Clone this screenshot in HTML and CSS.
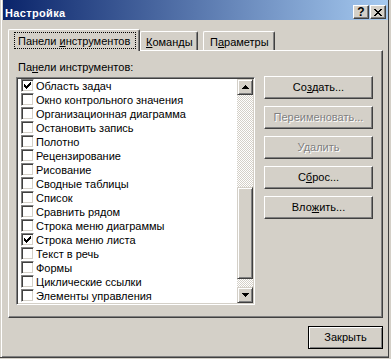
FILE: index.html
```html
<!DOCTYPE html>
<html lang="ru">
<head>
<meta charset="utf-8">
<title>Настройка</title>
<link rel="stylesheet" href="styles.css">
</head>
<body>
<div class="window">
  <div class="titlebar">
    <span class="title">Настройка</span>
    <div class="caption-btns">
      <span class="cbtn help">?</span>
      <span class="cbtn close"><svg width="8" height="7" viewBox="0 0 8 7" shape-rendering="crispEdges"><path d="M0 0h2v1H0zM6 0h2v1H6zM1 1h2v1H1zM5 1h2v1H5zM2 2h4v1H2zM3 3h2v1H3zM2 4h4v1H2zM1 5h2v1H1zM5 5h2v1H5zM0 6h2v1H0zM6 6h2v1H6z"/></svg></span>
    </div>
  </div>
  <div class="client">
    <div class="tabs">
      <div class="tab active"><span class="focus">Панели <u>и</u>нструментов</span></div>
      <div class="tab t2"><u>К</u>оманды</div>
      <div class="tab t3">П<u>а</u>раметры</div>
    </div>
    <div class="panel">
      <div class="left">
        <div class="label">Па<u>н</u>ели инструментов:</div>
        <div class="listbox">
          <div class="items">
            <div class="item"><span class="chk"><svg width="11" height="11" viewBox="0 0 11 11" shape-rendering="crispEdges"><path d="M2 4h1v3H2zM3 5h1v3H3zM4 6h1v3H4zM5 5h1v3H5zM6 4h1v3H6zM7 3h1v3H7zM8 2h1v3H8z"/></svg></span>Область задач</div>
            <div class="item"><span class="chk"></span>Окно контрольного значения</div>
            <div class="item"><span class="chk"></span>Организационная диаграмма</div>
            <div class="item"><span class="chk"></span>Остановить запись</div>
            <div class="item"><span class="chk"></span>Полотно</div>
            <div class="item"><span class="chk"></span>Рецензирование</div>
            <div class="item"><span class="chk"></span>Рисование</div>
            <div class="item"><span class="chk"></span>Сводные таблицы</div>
            <div class="item"><span class="chk"></span>Список</div>
            <div class="item"><span class="chk"></span>Сравнить рядом</div>
            <div class="item"><span class="chk"></span>Строка меню диаграммы</div>
            <div class="item"><span class="chk"><svg width="11" height="11" viewBox="0 0 11 11" shape-rendering="crispEdges"><path d="M2 4h1v3H2zM3 5h1v3H3zM4 6h1v3H4zM5 5h1v3H5zM6 4h1v3H6zM7 3h1v3H7zM8 2h1v3H8z"/></svg></span>Строка меню листа</div>
            <div class="item"><span class="chk"></span>Текст в речь</div>
            <div class="item"><span class="chk"></span>Формы</div>
            <div class="item"><span class="chk"></span>Циклические ссылки</div>
            <div class="item"><span class="chk"></span>Элементы управления</div>
          </div>
          <div class="vscroll">
            <div class="sbtn"><svg width="7" height="4" viewBox="0 0 7 4" shape-rendering="crispEdges"><path d="M3 0h1v1H3zM2 1h3v1H2zM1 2h5v1H1zM0 3h7v1H0z"/></svg></div>
            <div class="track track-top"></div>
            <div class="thumb"></div>
            <div class="track track-bottom"></div>
            <div class="sbtn"><svg width="7" height="4" viewBox="0 0 7 4" shape-rendering="crispEdges"><path d="M0 0h7v1H0zM1 1h5v1H1zM2 2h3v1H2zM3 3h1v1H3z"/></svg></div>
          </div>
        </div>
      </div>
      <div class="right">
        <div class="btn">Со<u>з</u>дать...</div>
        <div class="btn disabled">Переименовать...</div>
        <div class="btn disabled">Удалить</div>
        <div class="btn">С<u>б</u>рос...</div>
        <div class="btn">Вло<u>ж</u>ить...</div>
      </div>
    </div>
    <div class="footer">
      <div class="btn default">Закрыть</div>
    </div>
  </div>
</div>
</body>
</html>
```

FILE: styles.css
```css
* { box-sizing: border-box; }
html, body { margin: 0; padding: 0; }
body {
  width: 391px;
  height: 359px;
  overflow: hidden;
  background: #d4d0c8;
  font-family: "Liberation Sans", Arial, sans-serif;
  font-size: 11px;
  line-height: 13px;
  color: #000;
}
u { text-decoration: underline; text-underline-offset: 1px; }

.window {
  width: 389px;
  height: 358px;
  padding: 0 0 2px 3px;
  background: #d4d0c8;
  border-right: 1px solid #404040;
  border-bottom: 1px solid #404040;
  box-shadow: inset 1px 0 #d4d0c8, inset 2px 0 #fff, inset 0 -1px #808080;
}

.titlebar {
  height: 20px;
  display: flex;
  align-items: flex-start;
  padding: 0 2px 0 2px;
  background: linear-gradient(to right, #0a246a, #a6caf0);
  color: #fff;
  font-weight: bold;
}
.title { padding-top: 7px; line-height: 13px; letter-spacing: 0.35px; }
.caption-btns { margin-left: auto; margin-top: 5px; display: flex; gap: 1px; }
.cbtn {
  width: 16px;
  height: 14px;
  display: flex;
  align-items: center;
  justify-content: center;
  background: #d4d0c8;
  color: #000;
  border: 1px solid;
  border-color: #fff #404040 #404040 #fff;
  box-shadow: inset -1px -1px #808080;
}
.cbtn.help { font-size: 12px; line-height: 12px; font-weight: bold; }
.cbtn svg { display: block; }

.client { padding: 9px 5px 0 5px; }

.tabs { display: flex; align-items: flex-end; height: 21px; }
.tab {
  height: 19px;
  padding-top: 4px;
  background: #d4d0c8;
  border-top: 1px solid #fff;
  border-left: 1px solid #fff;
  border-right: 1px solid #404040;
  box-shadow: inset -1px 0 #808080;
  border-radius: 2px 2px 0 0;
  white-space: nowrap;
}
.tab.active {
  position: relative;
  z-index: 1;
  width: 132px;
  height: 22px;
  margin-bottom: -1px;
  padding: 2px 0 0 5px;
}
.focus {
  display: inline-block;
  width: 122px;
  height: 17px;
  padding: 2px 0 0 3px;
  border: 1px dotted #000;
}
.tab.t2 { width: 58px; padding-left: 5px; }
.tab.t3 { width: 72px; margin-left: 5px; padding-left: 6px; }

.panel {
  height: 268px;
  display: flex;
  padding: 10px 8px 0 7px;
  border-top: 1px solid #fff;
  border-left: 1px solid #fff;
  border-right: 1px solid #404040;
  border-bottom: 1px solid #404040;
  box-shadow: inset -1px -1px #808080;
}
.left { width: 239px; }
.label { margin: 0 0 3px 2px; }

.listbox {
  height: 228px;
  display: flex;
  background: #fff;
  border: 1px solid;
  border-color: #808080 #fff #fff #808080;
  box-shadow: inset 1px 1px #404040, inset -1px -1px #d4d0c8;
  padding: 1px;
}
.items { flex: 1; overflow: hidden; }
.item {
  height: 14px;
  line-height: 14px;
  display: flex;
  align-items: flex-start;
  white-space: nowrap;
}
.chk {
  flex: none;
  width: 13px;
  height: 13px;
  margin: 0 2px 0 3px;
  background: #fff;
  border: 1px solid;
  border-color: #808080 #fff #fff #808080;
  box-shadow: inset 1px 1px #404040, inset -1px -1px #d4d0c8;
}
.chk svg { display: block; }

.vscroll { width: 16px; display: flex; flex-direction: column; }
.sbtn, .thumb {
  background: #d4d0c8;
  border: 1px solid;
  border-color: #d4d0c8 #404040 #404040 #d4d0c8;
  box-shadow: inset 1px 1px #fff, inset -1px -1px #808080;
}
.sbtn { height: 16px; display: flex; align-items: center; justify-content: center; }
.sbtn svg { display: block; }
.track {
  background-image: conic-gradient(#fff 0 25%, #d4d0c8 0 50%, #fff 0 75%, #d4d0c8 0);
  background-size: 2px 2px;
}
.track-top { height: 92px; }
.thumb { height: 92px; }
.track-bottom { flex: 1; }

.right {
  margin-left: 9px;
  padding-top: 15px;
  display: flex;
  flex-direction: column;
  gap: 7px;
}
.btn {
  width: 109px;
  height: 23px;
  display: flex;
  align-items: center;
  justify-content: center;
  background: #d4d0c8;
  border: 1px solid;
  border-color: #fff #404040 #404040 #fff;
  box-shadow: inset -1px -1px #808080;
  white-space: nowrap;
}
.btn.disabled { color: #808080; text-shadow: 1px 1px 0 #fff; }

.footer { display: flex; justify-content: flex-end; padding-top: 8px; }
.btn.default {
  width: 75px;
  border: 1px solid #000;
  box-shadow: inset 1px 1px #fff, inset -1px -1px #808080;
}
```
